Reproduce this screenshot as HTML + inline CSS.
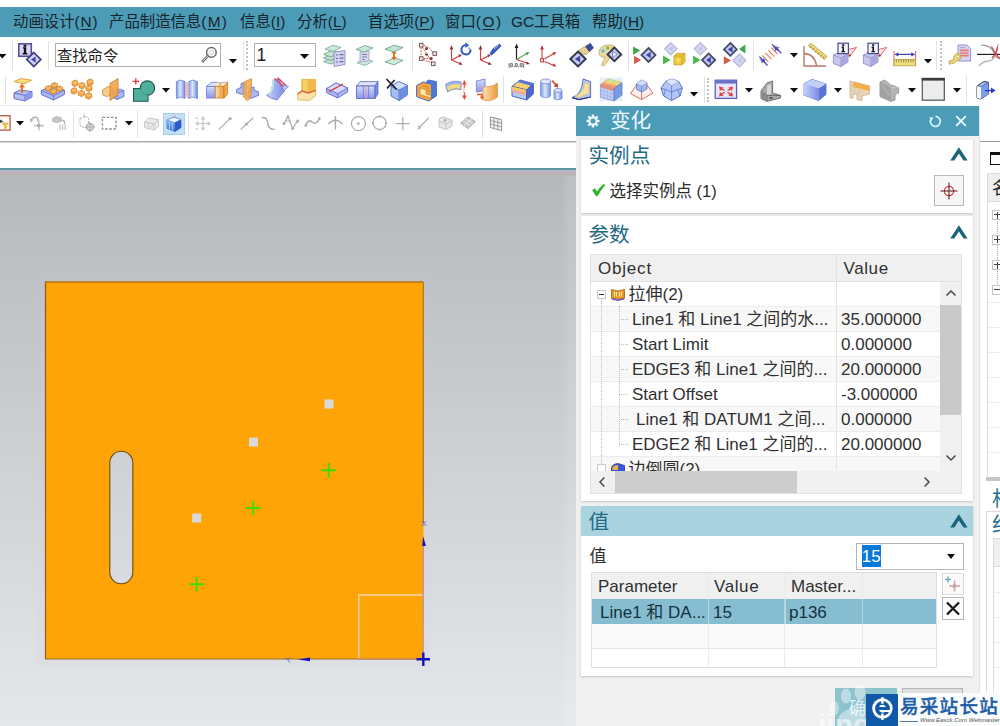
<!DOCTYPE html>
<html lang="zh-CN">
<head>
<meta charset="utf-8">
<title>NX</title>
<style>
html,body{margin:0;padding:0;}
body{width:1000px;height:726px;overflow:hidden;background:#fff;position:relative;
 font-family:"Liberation Sans","Noto Sans CJK SC",sans-serif;color:#222;}
.abs{position:absolute;}
#menubar{left:0;top:7px;width:1000px;height:30px;background:#4c9cb7;}
#menubar span{position:absolute;top:5px;font-size:15.4px;line-height:20px;color:#17242b;white-space:nowrap;}
#menubar u{text-decoration-thickness:1px;text-underline-offset:2px;}
.vsep{position:absolute;width:1px;background:#e2e2e2;}
.grip{position:absolute;width:2px;border-left:2px dotted #c2c2c2;}
.dd{position:absolute;width:0;height:0;border-left:4px solid transparent;border-right:4px solid transparent;border-top:5px solid #111;}
.ico{position:absolute;overflow:visible;}
/* viewport */
#vp{left:0;top:172px;width:576px;height:554px;background:linear-gradient(#b5b9bb 0px,#b5b9bb 6px,#e5e8eb 554px);}
/* dialog */
#dlg{left:576px;top:106px;width:402.5px;height:620px;background:#f0f0f0;}
#dlgtitle{left:0;top:0;width:402.5px;height:29.5px;background:#4c9bb7;}
.sec{position:absolute;left:4px;width:392px;background:#fff;box-shadow:0 1px 2px rgba(0,0,0,.18);}
.sech{position:absolute;left:12px;font-size:20.6px;line-height:24px;margin-top:.8px;color:#256a84;white-space:nowrap;}
.chev{position:absolute;}
.t17{font-size:17px;line-height:25px;color:#303030;white-space:nowrap;position:absolute;}
.row{position:absolute;left:0;height:25px;}
</style>
</head>
<body>

<!-- ============ MENU BAR ============ -->
<div id="menubar" class="abs">
 <span style="left:13px">动画设计(<u style="padding:0 .9px">N</u>)</span>
 <span style="left:109px">产品制造信息(<u style="padding:0 1.2px">M</u>)</span>
 <span style="left:240px">信息(<u>I</u>)</span>
 <span style="left:297px">分析(<u>L</u>)</span>
 <span style="left:368px">首选项(<u>P</u>)</span>
 <span style="left:445px">窗口(<u style="padding:0 1.6px">O</u>)</span>
 <span style="left:511px">GC工具箱</span>
 <span style="left:592px">帮助(<u>H</u>)</span>
</div>

<!-- ============ TOOLBARS ============ -->
<div id="tb" class="abs" style="left:0;top:37px;width:1000px;height:105px;background:#fff;">
 <!--TB-START-->
<svg class="ico" style="left:-2.5px;top:16.5px" width="8.5" height="4.5" viewBox="0 0 8.5 4.5"><path d="M0 0 H8.5 L4.25 4.5 Z" fill="#0c0c0c"/></svg>
<div class="vsep" style="left:11.5px;top:4px;height:29px;background:#e2e2e2"></div>
<svg class="ico" style="left:17px;top:5px" width="25" height="26" viewBox="0 0 25 26">
 <rect x="1.8" y="1.8" width="12.5" height="12.5" fill="#d9d6f2" stroke="#5a4d9c" stroke-width="1.6"/>
 <path d="M6 5.2 H9.2 V11 H10.4 V12.4 H5.6 V11 H6.8 V6.6 H6 Z" fill="#111"/><rect x="6.6" y="2.8" width="2.8" height="2" fill="#111"/>
 <path d="M16.8 10.5 L23.8 17.5 L16.8 24.5 L9.8 17.5 Z" fill="#d2d0f0" stroke="#3c3c7c" stroke-width="1.7"/>
 <path d="M18.6 14.4 L14 17.6 L18.6 20.8 Z" fill="#3a4ab0"/></svg>
<div class="vsep" style="left:47.5px;top:4px;height:29px;background:#e2e2e2"></div>
<div class="abs" style="left:55px;top:6px;width:165.5px;height:24.4px;border:1px solid #a4b4ac;box-sizing:border-box;background:#fff;"></div>
<div class="abs" style="left:57px;top:7.5px;font-size:15.3px;line-height:21px;color:#1c1c1c;white-space:nowrap;">查找命令</div>
<svg class="ico" style="left:200px;top:9px" width="18" height="18" viewBox="0 0 18 18"><circle cx="11.4" cy="6.4" r="4.8" fill="#fff" stroke="#6a6a6a" stroke-width="1.5"/><circle cx="11.4" cy="6.4" r="2.4" fill="none" stroke="#c9c9c9" stroke-width=".9"/><path d="M8 9.8 L3 15" stroke="#6a6a6a" stroke-width="2.6" stroke-linecap="round"/><path d="M8 9.8 L3.4 14.6" stroke="#e8e8e8" stroke-width="1" stroke-linecap="round"/></svg>
<svg class="ico" style="left:229px;top:22px" width="8" height="4.5" viewBox="0 0 8 4.5"><path d="M0 0 H8 L4.0 4.5 Z" fill="#0c0c0c"/></svg>
<div class="vsep" style="left:242.5px;top:4px;height:29px;background:#e2e2e2"></div>
<div class="grip" style="left:246px;top:4px;height:29px"></div>
<div class="abs" style="left:254px;top:6.4px;width:61.6px;height:24px;border:1px solid #a9b5b0;box-sizing:border-box;background:#fff;"></div>
<div class="abs" style="left:256.5px;top:7px;font-size:17.5px;line-height:22px;color:#1c1c1c;">1</div>
<svg class="ico" style="left:300px;top:17px" width="9" height="5" viewBox="0 0 9 5"><path d="M0 0 H9 L4.5 5 Z" fill="#0c0c0c"/></svg>
<svg class="ico" style="left:323px;top:7px" width="25" height="24" viewBox="0 0 25 24"><path d="M0.5 17.6 L8.0 14 L15.5 16.16 L8.0 20.12 Z" fill="#bfe6d2" stroke="#6a9a88" stroke-width=".8"/><path d="M0.5 14.0 L8.0 10.4 L15.5 12.56 L8.0 16.52 Z" fill="#bfe6d2" stroke="#6a9a88" stroke-width=".8"/><path d="M0.5 10.4 L8.0 6.8 L15.5 8.96 L8.0 12.92 Z" fill="#bfe6d2" stroke="#6a9a88" stroke-width=".8"/><path d="M11 8 L22 6.5 V20.5 L11 22.5 Z" fill="#d4d2f0" stroke="#8c8cc4" stroke-width=".9"/><path d="M13 11 H15 M16.5 10.6 H20.5 M13 14.5 H15 M16.5 14.1 H20.5 M13 18 H15 M16.5 17.6 H20.5" stroke="#6a6aa8" stroke-width="1.1"/><path d="M2 5.0 L10.0 1.2 L18 3.4799999999999995 L10.0 7.66 Z" fill="#c8e8da" stroke="#78a898" stroke-width=".8"/></svg>
<svg class="ico" style="left:354px;top:7px" width="23" height="24" viewBox="0 0 23 24"><path d="M3 18.8 L11.0 15 L19 17.28 L11.0 21.46 Z" fill="#d2ecdf" stroke="#78a898" stroke-width=".8"/><path d="M6 8 L15 7 V17 L6 18 Z" fill="#dcdaf2" stroke="#9a9ac8" stroke-width=".8"/><path d="M8 10.5 H13 M8 13 H13 M8 15.5 H11" stroke="#7a7ab0" stroke-width="1"/><path d="M2 5.5 L10.5 1.5 L19 3.9 L10.5 8.3 Z" fill="#c6e6d6" stroke="#6a9a88" stroke-width=".8"/></svg>
<svg class="ico" style="left:383px;top:7px" width="23" height="23" viewBox="0 0 23 23"><path d="M2 18 L11.0 14 L20 16.4 L11.0 20.8 Z" fill="#cdeadc" stroke="#5c9a86" stroke-width=".8"/><path d="M11 7 V15" stroke="#e87a2a" stroke-width="2"/><path d="M8.4 9.5 L11 6 L13.6 9.5 Z M8.4 13 L11 16.5 L13.6 13 Z" fill="#e86a2a"/><path d="M2 5.2 L11.0 1.2 L20 3.5999999999999996 L11.0 8.0 Z" fill="#c2e4d2" stroke="#5c9a86" stroke-width=".8"/></svg>
<div class="vsep" style="left:412.3px;top:4px;height:29px;background:#e2e2e2"></div>
<svg class="ico" style="left:418px;top:5px" width="22" height="26" viewBox="0 0 22 26">
 <path d="M3 3 V16.5 H13.5 M3 3 Q13 4 15 12 M3 16.5 L15 21.5 M3 3 L15 21.5" fill="none" stroke="#c84a3a" stroke-width="1" stroke-dasharray="1.6 1.1"/>
 <rect x="1.4" y="1.4" width="3.6" height="3.6" fill="#eee" stroke="#6a4a4a" stroke-width=".9"/>
 <rect x="1.4" y="14.8" width="3.6" height="3.6" fill="#eee" stroke="#6a4a4a" stroke-width=".9"/>
 <rect x="15" y="9.8" width="3.6" height="3.6" fill="#eee" stroke="#6a4a4a" stroke-width=".9"/>
 <rect x="13.4" y="20" width="3.6" height="3.6" fill="#eee" stroke="#6a4a4a" stroke-width=".9"/>
 <circle cx="8.5" cy="6.5" r="1.5" fill="#8a3030"/><circle cx="13.2" cy="16.4" r="1.5" fill="#8a3030"/><circle cx="8.5" cy="12.5" r="1.3" fill="#8a3030"/></svg>
<svg class="ico" style="left:448px;top:5px" width="25" height="26" viewBox="0 0 25 26"><path d="M3.5 18 V5.5 M3.5 18 L12 13.5 M3.5 18 L13 22" fill="none" stroke="#d83a3a" stroke-width="1.1"/>
 <path d="M1.6 7.5 L3.5 3 L5.4 7.5 Z M13.8 12.4 L10.2 12.6 L11.8 15.4 Z M14.8 22.8 L10.8 22.8 L12 19.8 Z" fill="#8a3a4a"/><path d="M18 3.2 A4.6 4.6 0 1 0 22.6 8" fill="none" stroke="#3a62c8" stroke-width="2.2"/><path d="M17 0.6 L21.4 3 L17.6 6 Z" fill="#3a62c8"/><path d="M20 6 A3 3 0 0 1 22.6 8" fill="none" stroke="#9ab4e8" stroke-width="2"/></svg>
<svg class="ico" style="left:477px;top:5px" width="25" height="26" viewBox="0 0 25 26"><path d="M3.5 18 V5.5 M3.5 18 L12 13.5 M3.5 18 L13 22" fill="none" stroke="#d83a3a" stroke-width="1.1"/>
 <path d="M1.6 7.5 L3.5 3 L5.4 7.5 Z M13.8 12.4 L10.2 12.6 L11.8 15.4 Z M14.8 22.8 L10.8 22.8 L12 19.8 Z" fill="#8a3a4a"/><path d="M13 11.5 L16 6.8 L22.5 2 L24 4 L18.5 9.6 L14.6 13 Z" fill="#3a5ec8" stroke="#24408a" stroke-width=".7"/><path d="M17 7 L21.6 3.4" stroke="#a8c0f0" stroke-width="1"/></svg>
<svg class="ico" style="left:508px;top:5px" width="25" height="26" viewBox="0 0 25 26">
 <path d="M8.5 17.5 V4" stroke="#222" stroke-width="1.2"/><path d="M6.6 6 L8.5 1.6 L10.4 6 Z" fill="#222"/>
 <path d="M8.5 17.5 L19 11.5" stroke="#5ab05a" stroke-width="1.2"/><path d="M21.6 10 L17.4 10.4 L19 13.4 Z" fill="#4a9a4a"/>
 <path d="M8.5 17.5 L19 21" stroke="#d83a3a" stroke-width="1.2"/><path d="M22 22 L18 22.6 L18.8 19.4 Z" fill="#8a3a4a"/>
 <text x="0.2" y="24.6" font-family="Liberation Sans, sans-serif" font-size="5.6" font-weight="bold" fill="#444">(0,0,0)</text></svg>
<svg class="ico" style="left:537px;top:5px" width="24" height="26" viewBox="0 0 24 26">
 <path d="M5 18 V5.5 M7.5 17 L17 11.5 M7.5 19.5 L17 23.5" fill="none" stroke="#d83a3a" stroke-width="1.1"/>
 <path d="M3.1 7.5 L5 3 L6.9 7.5 Z M19.4 10 L15.4 10.4 L17 13.4 Z M19.6 24.6 L15.4 24.2 L16.8 21.2 Z" fill="#b03a44"/>
 <rect x="3.6" y="16.6" width="3" height="3.4" fill="#f4d0d0" stroke="#c03a3a" stroke-width=".9"/></svg>
<svg class="ico" style="left:568px;top:5px" width="26" height="26" viewBox="0 0 26 26">
 <path d="M10.5 8.5 L16 4.8 L19.5 5.4 L22 9 L18 12.6 L13 12 Z" fill="#e8cf96" stroke="#b89a5a" stroke-width=".7"/>
 <path d="M17.5 4.4 L22.4 1.4 L25.4 6 L21.4 9.4 Z" fill="#3c4c9c" stroke="#26306a" stroke-width=".7"/>
 <path d="M10 9.6 L17.6 17 L10 24.4 L2.4 17 Z" fill="#d0cdf0" stroke="#343850" stroke-width="2.1"/>
 <path d="M12.2 13.4 L6.8 17 L12.2 20.6 Z" fill="#3848a8"/></svg>
<svg class="ico" style="left:597px;top:5px" width="25" height="26" viewBox="0 0 25 26">
 <path d="M2 11 Q2 4 10 3 Q18 2.4 19.6 7 Q20 11 15 12.4 Q11.6 13.4 13 16 L7 24 L4.4 23 L8 15.4 Q2.4 15.6 2 11 Z" fill="#ecd9a0" stroke="#c4a860" stroke-width=".8"/>
 <circle cx="6" cy="9" r="1.7" fill="#5ab8d8"/><circle cx="10.6" cy="6" r="1.7" fill="#68c068"/><circle cx="15.6" cy="6.6" r="1.6" fill="#e8c040"/>
 <path d="M17.4 5.6 L24.2 12.4 L17.4 19.2 L10.6 12.4 Z" fill="#d0cdf0" stroke="#343850" stroke-width="2"/>
 <path d="M15.6 9.2 L20.4 12.4 L15.6 15.6 Z" fill="#f4f4ff" stroke="#3848a8" stroke-width=".6"/></svg>
<div class="vsep" style="left:627.5px;top:4px;height:29px;background:#e2e2e2"></div>
<svg class="ico" style="left:631px;top:5px" width="27" height="26" viewBox="0 0 27 26"><path d="M2.04 4.3999999999999995 L9.18 8.6 L2.04 12.8 Z" fill="#3aa84a"/><path d="M3.04 13.8 L10.18 18 L3.04 22.2 Z" fill="#d8584a"/><path d="M17.5 6 L24.5 13 L17.5 20 L10.5 13 Z" fill="#c9c6ee" stroke="#454b68" stroke-width="1.8"/><path d="M19.7 9.8 L14.9 13 L19.7 16.2 Z" fill="#3848a8"/></svg>
<svg class="ico" style="left:662px;top:5px" width="26" height="26" viewBox="0 0 26 26"><path d="M8.8 0.5999999999999996 L15.0 6.8 L8.8 13.0 L2.6000000000000005 6.8 Z" fill="#d5d6f0" stroke="#b4b6dc" stroke-width="1.2"/><path d="M10.600000000000001 4.199999999999999 L6.800000000000001 6.8 L10.600000000000001 9.4 Z" fill="#c2c4e6"/><path d="M1.0799999999999992 13.6 L8.56 18 L1.0799999999999992 22.4 Z" fill="#4cb84c"/><path d="M12 14 L15 11.4 H23 V20 L20 22.8 H12 Z" fill="#f0c838" stroke="#c89a18" stroke-width=".8"/><path d="M12 14 H20 V22.8 M20 14 L23 11.4" fill="none" stroke="#c89a18" stroke-width=".8"/><path d="M13.6 18 H18.6 M16 15.6 V21" stroke="#fbe88a" stroke-width="1.2"/></svg>
<svg class="ico" style="left:692px;top:5px" width="26" height="26" viewBox="0 0 26 26"><path d="M8.4 0.5999999999999996 L14.600000000000001 6.8 L8.4 13.0 L2.2 6.8 Z" fill="#d5d6f0" stroke="#b4b6dc" stroke-width="1.2"/><path d="M10.200000000000001 4.199999999999999 L6.4 6.8 L10.200000000000001 9.4 Z" fill="#c2c4e6"/><path d="M1.0799999999999992 13.6 L8.56 18 L1.0799999999999992 22.4 Z" fill="#4cb84c"/><path d="M16.6 11.4 L23.200000000000003 18 L16.6 24.6 L10.000000000000002 18 Z" fill="#c9c6ee" stroke="#454b68" stroke-width="1.8"/><path d="M18.8 14.8 L14.000000000000002 18 L18.8 21.2 Z" fill="#3848a8"/></svg>
<svg class="ico" style="left:722px;top:5px" width="26" height="26" viewBox="0 0 26 26"><path d="M8.4 1.0 L14.8 7.4 L8.4 13.8 L2.0 7.4 Z" fill="#c9c6ee" stroke="#454b68" stroke-width="1.8"/><path d="M10.600000000000001 4.2 L5.800000000000001 7.4 L10.600000000000001 10.600000000000001 Z" fill="#3848a8"/><path d="M1.8399999999999999 14.2 L8.98 18.4 L1.8399999999999999 22.599999999999998 Z" fill="#d8584a"/><path d="M17.4 11.999999999999998 L23.799999999999997 18.4 L17.4 24.799999999999997 L10.999999999999998 18.4 Z" fill="#d5d6f0" stroke="#b4b6dc" stroke-width="1.2"/><path d="M19.2 15.799999999999999 L15.399999999999999 18.4 L19.2 21.0 Z" fill="#c2c4e6"/><path d="M23.4 2.6 L17 7 L23.4 11.4 Z" fill="#3aa84a"/></svg>
<div class="vsep" style="left:752.5px;top:4px;height:29px;background:#e2e2e2"></div>
<svg class="ico" style="left:758px;top:6px" width="25" height="25" viewBox="0 0 25 25">
 <path d="M4.4 12.4 L10.4 18.8 M7.4 9.8 L13.4 16.2 M10.4 7.2 L16.4 13.6 M13.4 4.6 L19.4 11 M16.2 2.4 L21.6 8.2" stroke="#ec7a6a" stroke-width="1.1" fill="none"/>
 <path d="M1.4 13.6 L9.6 22.6 M14 1.4 L23.4 10.4" stroke="#3c48b8" stroke-width="1.3"/>
 <path d="M5 17.6 l0 -3.4 l1 2.4 l2.6 -.6 l-2.2 1.8 l1.2 2.6 l-2.4 -1.4 l-2.2 1.6 l.8 -2.6 l-2.4 -1.4 l2.8 0 Z M18.4 5.6 l0 -3.4 l1 2.4 l2.6 -.6 l-2.2 1.8 l1.2 2.6 l-2.4 -1.4 l-2.2 1.6 l.8 -2.6 l-2.4 -1.4 l2.8 0 Z" fill="#3c48b8"/></svg>
<svg class="ico" style="left:789.5px;top:16px" width="8" height="4.5" viewBox="0 0 8 4.5"><path d="M0 0 H8 L4.0 4.5 Z" fill="#0c0c0c"/></svg>
<svg class="ico" style="left:802px;top:6px" width="26" height="25" viewBox="0 0 26 25">
 <path d="M2 3 V23 H24" fill="none" stroke="#b87868" stroke-width="1.4"/>
 <path d="M2 10.5 Q13 11 14.6 23" fill="none" stroke="#b87868" stroke-width="1.3"/>
 <path d="M6.4 2.4 L9.2 0.6 L25 13.4 L22.4 16.6 Z" fill="#f0d878" stroke="#b89838" stroke-width=".8"/>
 <path d="M9.4 3.2 L8 5 M12 5.2 L10.6 7 M14.6 7.4 L13.2 9.2 M17.2 9.4 L15.8 11.2 M19.8 11.6 L18.4 13.4 M22.2 13.4 L21 15" stroke="#8a6a1a" stroke-width=".8"/></svg>
<svg class="ico" style="left:832px;top:5px" width="26" height="26" viewBox="0 0 26 26">
 <path d="M1.4 13 L7 10 L16 11.6 V20 L9 24.6 L1.4 21.4 Z" fill="#c9c6ee" stroke="#8a88c8" stroke-width=".8"/>
 <path d="M1.4 13 L9 16 L16 11.6 M9 16 V24.6" fill="none" stroke="#8a88c8" stroke-width=".8"/>
 <path d="M9 16 L16 11.6 V20 L9 24.6 Z" fill="#a9a6dc"/>
 <path d="M13 8.4 L24.6 5.4 L17.4 14.6" fill="#fbe4e0" stroke="#d85a5a" stroke-width=".9"/><circle cx="17.6" cy="13.4" r="1.2" fill="#b03a3a"/>
 <rect x="6" y="1.2" width="10.4" height="10.4" fill="#f4f4fc" stroke="#4a4a8a" stroke-width="1.2"/>
 <path d="M9.6 4.6 H12 V9 H13 V10.2 H9.4 V9 H10.4 V5.8 H9.6 Z" fill="#111"/><rect x="10.2" y="2.2" width="2" height="1.7" fill="#111"/></svg>
<svg class="ico" style="left:862px;top:5px" width="26" height="26" viewBox="0 0 26 26">
 <path d="M1.4 13 L7 10 L16 11.6 V20 L9 24.6 L1.4 21.4 Z" fill="#c9c6ee" stroke="#8a88c8" stroke-width=".8"/>
 <path d="M1.4 13 L9 16 L16 11.6 M9 16 V24.6" fill="none" stroke="#8a88c8" stroke-width=".8"/>
 <path d="M9 16 L16 11.6 V20 L9 24.6 Z" fill="#a9a6dc"/>
 <path d="M13 8.4 L24.6 5.4 L17.4 14.6" fill="#fbe4e0" stroke="#d85a5a" stroke-width=".9"/><circle cx="17.6" cy="13.4" r="1.2" fill="#b03a3a"/>
 <rect x="6" y="1.2" width="10.4" height="10.4" fill="#f4f4fc" stroke="#4a4a8a" stroke-width="1.2"/>
 <path d="M9.6 4.6 H12 V9 H13 V10.2 H9.4 V9 H10.4 V5.8 H9.6 Z" fill="#111"/><rect x="10.2" y="2.2" width="2" height="1.7" fill="#111"/></svg>
<svg class="ico" style="left:892px;top:12px" width="26" height="19" viewBox="0 0 26 19">
 <path d="M2 2 V17 M23.6 2 V17" stroke="#d85a5a" stroke-width="1"/>
 <path d="M4 5.4 H21.6" stroke="#3c48a8" stroke-width="1.2"/><path d="M2.4 5.4 L6.4 3.2 V7.6 Z M23.2 5.4 L19.2 3.2 V7.6 Z" fill="#3c48a8"/>
 <rect x="2" y="10.4" width="21.6" height="6.4" fill="#f0dc82" stroke="#b8a040" stroke-width=".8"/>
 <path d="M4.4 10.4 v3 M6.8 10.4 v3 M9.2 10.4 v3 M11.6 10.4 v3 M14 10.4 v3 M16.4 10.4 v3 M18.8 10.4 v3 M21.2 10.4 v3" stroke="#8a7420" stroke-width=".7"/></svg>
<svg class="ico" style="left:924px;top:22px" width="8" height="4.5" viewBox="0 0 8 4.5"><path d="M0 0 H8 L4.0 4.5 Z" fill="#0c0c0c"/></svg>
<div class="vsep" style="left:936.3px;top:4px;height:29px;background:#e2e2e2"></div>
<div class="grip" style="left:940px;top:4px;height:29px"></div>
<svg class="ico" style="left:947px;top:5px" width="26" height="26" viewBox="0 0 26 26">
 <path d="M11 3 H20 L23.6 6.6 V19 H11 Z" fill="#d6d4f2" stroke="#8a8ac0" stroke-width=".9"/>
 <path d="M13 8.4 H21.6 M13 11 H21.6 M13 13.6 H21.6" stroke="#e87a7a" stroke-width="1.6"/>
 <path d="M13 5.6 H18" stroke="#a8a8d8" stroke-width="1.2"/>
 <path d="M1.6 19.6 L7 17 Q6 12.6 10 11.6 Q13.6 11.4 14 14.6 Q14 18 10.6 18.4 L6 22 L4.4 21 L2.6 22.4 Z" fill="#ecd878" stroke="#b8a040" stroke-width=".8"/><circle cx="11" cy="14.6" r="1.3" fill="#fff" stroke="#b8a040" stroke-width=".6"/></svg>
<svg class="ico" style="left:977px;top:5px" width="24" height="26" viewBox="0 0 24 26">
 <path d="M2 24 Q6 19 12 19 Q20 18 21 2" fill="none" stroke="#b4b4b4" stroke-width="1.3"/>
 <path d="M4 3 Q14 3 17.4 11.4 Q19 15.6 23 16.6" fill="none" stroke="#8a8a8a" stroke-width="1.2"/>
 <path d="M0 12.4 H24" stroke="#222" stroke-width="1.2"/>
 <path d="M14.4 4.6 Q18 12 24 17.6 M20.6 4.6 Q19.6 11 15 16" fill="none" stroke="#d83a4a" stroke-width="1.2"/></svg>
<div class="vsep" style="left:5px;top:39px;height:27px;background:#e2e2e2"></div>
<svg class="ico" style="left:12px;top:40px" width="22" height="25" viewBox="0 0 22 25">
 <path d="M2 16 L8 13 L20 14.6 V20 L13 24 L2 21.6 Z" fill="#b4c0f4" stroke="#5a68c8" stroke-width=".9"/>
 <path d="M2 16 L13 18.4 L20 14.6 M13 18.4 V24" fill="none" stroke="#5a68c8" stroke-width=".9"/><path d="M13 18.4 L20 14.6 V20 L13 24 Z" fill="#8c9ae4"/>
 <path d="M10 16 V8" stroke="#e8782a" stroke-width="2.2"/><path d="M7 10.4 L10 6.4 L13 10.4 Z" fill="#e8782a"/>
 <path d="M2 4.6 L9 1.6 L19.6 3.2 L12 6.8 Z" fill="#f8de7a" stroke="#d89a3a" stroke-width=".9"/></svg>
<svg class="ico" style="left:40px;top:41px" width="26" height="24" viewBox="0 0 26 24">
 <path d="M1.4 12.6 L11 8 L24.4 12 V16.4 L13.6 22 L1.4 16.6 Z" fill="#aab6f2" stroke="#5a68c8" stroke-width=".9"/>
 <path d="M1.4 12.6 L13.6 17.6 L24.4 12 M13.6 17.6 V22" fill="none" stroke="#5a68c8" stroke-width=".8"/>
 <g fill="#f2a444" stroke="#c87a1c" stroke-width=".7"><path d="M5.4 9 l3 -1.4 l3 1.2 v3 l-3 1.4 l-3 -1.2 Z"/><path d="M11.4 6 l3 -1.4 l3 1.2 v3 l-3 1.4 l-3 -1.2 Z"/><path d="M10.4 12 l3 -1.4 l3 1.2 v3 l-3 1.4 l-3 -1.2 Z"/><path d="M16.6 9.4 l3 -1.4 l3 1.2 v3 l-3 1.4 l-3 -1.2 Z"/></g>
 <path d="M6 9.4 l2.4 1 l2.6 -1.2 M12 6.4 l2.4 1 l2.6 -1.2 M11 12.4 l2.4 1 l2.6 -1.2 M17.2 9.8 l2.4 1 l2.6 -1.2" fill="none" stroke="#fbd9a0" stroke-width=".8"/></svg>
<svg class="ico" style="left:70px;top:41px" width="26" height="24" viewBox="0 0 26 24"><path d="M2 3.6 l3 -1.6 l3 1.4 v3.6 l-3 1.6 l-3 -1.4 Z" fill="#f4a84a" stroke="#c87a1c" stroke-width=".7"/><path d="M2.6 4 l2.4 1 l2.4 -1.2" fill="none" stroke="#fcdca8" stroke-width=".8"/><path d="M9 6.0 l3 -1.6 l3 1.4 v3.6 l-3 1.6 l-3 -1.4 Z" fill="#f4a84a" stroke="#c87a1c" stroke-width=".7"/><path d="M9.6 6.4 l2.4 1 l2.4 -1.2" fill="none" stroke="#fcdca8" stroke-width=".8"/><path d="M16 8.6 l3 -1.6 l3 1.4 v3.6 l-3 1.6 l-3 -1.4 Z" fill="#f4a84a" stroke="#c87a1c" stroke-width=".7"/><path d="M16.6 9 l2.4 1 l2.4 -1.2" fill="none" stroke="#fcdca8" stroke-width=".8"/><path d="M1 11.2 l3 -1.6 l3 1.4 v3.6 l-3 1.6 l-3 -1.4 Z" fill="#f4a84a" stroke="#c87a1c" stroke-width=".7"/><path d="M1.6 11.6 l2.4 1 l2.4 -1.2" fill="none" stroke="#fcdca8" stroke-width=".8"/><path d="M8.4 13.6 l3 -1.6 l3 1.4 v3.6 l-3 1.6 l-3 -1.4 Z" fill="#f4a84a" stroke="#c87a1c" stroke-width=".7"/><path d="M9.0 14 l2.4 1 l2.4 -1.2" fill="none" stroke="#fcdca8" stroke-width=".8"/><path d="M15.6 16.2 l3 -1.6 l3 1.4 v3.6 l-3 1.6 l-3 -1.4 Z" fill="#f4a84a" stroke="#c87a1c" stroke-width=".7"/><path d="M16.2 16.6 l2.4 1 l2.4 -1.2" fill="none" stroke="#fcdca8" stroke-width=".8"/><path d="M17 2.6 l3 -1.6 l3 1.4 v3.6 l-3 1.6 l-3 -1.4 Z" fill="#f4a84a" stroke="#c87a1c" stroke-width=".7"/><path d="M17.6 3 l2.4 1 l2.4 -1.2" fill="none" stroke="#fcdca8" stroke-width=".8"/></svg>
<svg class="ico" style="left:101px;top:40px" width="25" height="25" viewBox="0 0 25 25">
 <path d="M1.6 13 L7 9.6 L12 10.6 V17 L6 19.6 L1.6 18 Z" fill="#f8cc8a" stroke="#c88a3a" stroke-width=".8"/>
 <path d="M12 14 L19 12 L23 13.6 V19.6 L16 22.4 L12 20.6 Z" fill="#aab8f4" stroke="#5a68c8" stroke-width=".8"/><path d="M12 14 L16 15.8 L23 13.6 M16 15.8 V22.4" fill="none" stroke="#5a68c8" stroke-width=".7"/>
 <path d="M9 6.4 L17 1.6 V17.6 L9 23.6 Z" fill="#f2a444" fill-opacity=".88" stroke="#c87a1c" stroke-width=".8"/></svg>
<svg class="ico" style="left:132px;top:41px" width="25" height="25" viewBox="0 0 25 25">
 <rect x="1.6" y="10.6" width="14.4" height="12.6" fill="#4fae9c" stroke="#245a50" stroke-width="1.2"/>
 <circle cx="15.4" cy="10" r="7.2" fill="#4fae9c" stroke="#245a50" stroke-width="1.2"/>
 <path d="M2.2 11.2 H9 A7.2 7.2 0 0 0 15.4 17 V22.6 H2.2 Z" fill="#4fae9c"/>
 <path d="M0.6 3.4 H7 M3.8 0.2 V6.6" stroke="#e0323a" stroke-width="1.3"/></svg>
<svg class="ico" style="left:161.5px;top:50.5px" width="8" height="4.5" viewBox="0 0 8 4.5"><path d="M0 0 H8 L4.0 4.5 Z" fill="#0c0c0c"/></svg>
<svg width="0" height="0" style="position:absolute"><defs><linearGradient id="cyl" x1="0" x2="1"><stop offset="0" stop-color="#7c9ae8"/><stop offset=".45" stop-color="#dce8fc"/><stop offset="1" stop-color="#6c8ae0"/></linearGradient><linearGradient id="blv" x1="0" x2="0" y1="0" y2="1"><stop offset="0" stop-color="#d6dcfa"/><stop offset="1" stop-color="#8a98ea"/></linearGradient><linearGradient id="orv" x1="0" x2="1"><stop offset="0" stop-color="#fbe0b0"/><stop offset="1" stop-color="#f09a3a"/></linearGradient><linearGradient id="blh" x1="0" x2="1"><stop offset="0" stop-color="#c6d0fa"/><stop offset="1" stop-color="#7c8ce4"/></linearGradient><linearGradient id="cubeL" x1="0" x2="0" y1="0" y2="1"><stop offset="0" stop-color="#86b6f6"/><stop offset="1" stop-color="#3a70dc"/></linearGradient><linearGradient id="cube3" x1="0" x2="0" y1="0" y2="1"><stop offset="0" stop-color="#2a66d8"/><stop offset="1" stop-color="#1a48b8"/></linearGradient></defs></svg>
<svg class="ico" style="left:175px;top:41px" width="25" height="24" viewBox="0 0 25 24">
 <path d="M1.4 3.6 Q5.6 0.6 10 3.6 V20.6 Q5.6 17.6 1.4 20.6 Z" fill="url(#cyl)" stroke="#5a78d0" stroke-width=".7"/>
 <path d="M13.6 3.6 Q18 0.6 22.4 3.6 V20.6 Q18 17.6 13.6 20.6 Z" fill="url(#cyl)" stroke="#5a78d0" stroke-width=".7"/>
 <rect x="10" y="4" width="3.6" height="16" fill="#f2c4cc"/><path d="M10 7 h3.6 M10 10 h3.6 M10 13 h3.6 M10 16 h3.6" stroke="#d8909c" stroke-width=".6"/></svg>
<svg class="ico" style="left:205px;top:41px" width="26" height="24" viewBox="0 0 26 24">
 <path d="M1.6 8.4 L6 4.4 H22.6 L19 8.4 Z" fill="#dfe4fb" stroke="#6a78d0" stroke-width=".8"/>
 <path d="M12 4.4 H22.6 L19 8.4 H10 Z" fill="#fbe2b8"/>
 <rect x="1.6" y="8.4" width="8.6" height="11.6" fill="url(#blv)" stroke="#6a78d0" stroke-width=".8"/>
 <rect x="10.2" y="8.4" width="8.8" height="11.6" fill="url(#orv)" stroke="#c87a1c" stroke-width=".8"/>
 <path d="M19 8.4 L22.6 4.4 V16 L19 20 Z" fill="#f4a84a" stroke="#c87a1c" stroke-width=".8"/>
 <path d="M13.4 8.4 L15.6 5 V16 L13.4 20" fill="none" stroke="#d89a5a" stroke-width=".8"/></svg>
<svg class="ico" style="left:235px;top:40px" width="25" height="25" viewBox="0 0 25 25">
 <path d="M1.6 12.4 L6 10.4 V6.6 L10 5.4 V9 L13 10 V15 L6.4 17.4 L1.6 15.6 Z" fill="#aab8f4" stroke="#5a68c8" stroke-width=".8"/>
 <path d="M11 16 L15 14.6 V11 L19 10 V13.4 L23.4 14.6 V18.4 L16 21.4 L11 19.6 Z" fill="#aab8f4" stroke="#5a68c8" stroke-width=".8"/>
 <path d="M8.4 5.4 L16.4 1.6 V18.4 L12.6 24 L8.4 20 Z" fill="#f2a444" fill-opacity=".85" stroke="#d88a3a" stroke-width=".8"/>
 <path d="M12.6 4 V24" stroke="#e8c088" stroke-width=".7"/></svg>
<svg class="ico" style="left:265px;top:40px" width="25" height="25" viewBox="0 0 25 25">
 <path d="M8 3 L15 2 Q15 10 19.6 14 L12 23 Q6 22 1.6 18.4 Q8 14 8 3 Z" fill="url(#blh)" stroke="#6a78d0" stroke-width=".8"/>
 <path d="M8 3 Q9 11 4 17" fill="none" stroke="#c8f0d8" stroke-width="1.6"/>
 <path d="M15.4 6.4 L23.6 9.4 L19 14 Z" fill="#b8c6f6" stroke="#6a78d0" stroke-width=".7"/>
 <path d="M9.6 1.4 L18.6 9.6 M12.4 0.8 L21 8.4" stroke="#e8324a" stroke-width="1.2"/></svg>
<svg class="ico" style="left:296px;top:40px" width="23" height="25" viewBox="0 0 23 25">
 <path d="M6 2.4 H19.6 V18 L17 21 H6 Z" fill="#f7cf5e" stroke="#d8a838" stroke-width=".7"/>
 <path d="M12.4 2.4 V14 M6 2.4 V14" stroke="#e8b040" stroke-width=".8"/><path d="M12.4 2.4 H19.6 V14 H12.4 Z" fill="#f2b848"/>
 <path d="M1.6 17 L6 13.6 L12 15.6 L19.6 13 V18 L14 23.6 L1.6 23 Z" fill="#fbe2a8" stroke="#d8b060" stroke-width=".7"/>
 <path d="M1.6 17 L6 14 L12 16 L19.6 13.4" fill="none" stroke="#d8623a" stroke-width="1.4"/></svg>
<svg class="ico" style="left:325px;top:42px" width="24" height="22" viewBox="0 0 24 22">
 <path d="M1.6 9.6 L11 4 L22.6 9 V13 L12.6 19 L1.6 13.6 Z" fill="#aab6f2" stroke="#5a68c8" stroke-width=".9"/>
 <path d="M1.6 9.6 L11 4 L22.6 9 L12.6 14.6 Z" fill="#d6dcfa" stroke="#5a68c8" stroke-width=".8"/><path d="M12.6 14.6 V19" stroke="#5a68c8" stroke-width=".8"/>
 <path d="M4 12.6 L18 5" stroke="#e0323a" stroke-width="1.2"/></svg>
<svg class="ico" style="left:355px;top:42px" width="25" height="22" viewBox="0 0 25 22">
 <path d="M1.6 7 L5 2.6 H23 L20 7 Z" fill="#e0e5fc" stroke="#5a68c8" stroke-width=".8"/>
 <rect x="1.6" y="7" width="18.4" height="12.4" fill="url(#blv)" stroke="#5a68c8" stroke-width=".9"/>
 <path d="M20 7 L23 2.6 V15 L20 19.4 Z" fill="#7c8ce4" stroke="#5a68c8" stroke-width=".8"/>
 <path d="M8.4 7 V19.4 M13.6 7 V19.4" stroke="#6a78d0" stroke-width=".8"/><path d="M11 7 V19.4" stroke="#e89ab0" stroke-width=".9"/></svg>
<svg class="ico" style="left:385px;top:40px" width="24" height="25" viewBox="0 0 24 25">
 <path d="M6 9 L14 4.6 L22.4 8.4 V18 L14 23.6 L6 19 Z" fill="#a4bcf0" stroke="#4a68c0" stroke-width=".9"/>
 <path d="M6 9 L14 13 L22.4 8.4 M14 13 V23.6" fill="none" stroke="#4a68c0" stroke-width=".8"/><path d="M14 13 L22.4 8.4 V18 L14 23.6 Z" fill="#6c90e0"/><path d="M6 9 L14 4.6 L22.4 8.4 L14 13 Z" fill="#cfe0fa" stroke="#4a68c0" stroke-width=".6"/>
 <path d="M1.4 2 L11.6 12.4 M9.6 3 L2 11.4" stroke="#1c1c2c" stroke-width="1.6"/></svg>
<svg class="ico" style="left:415px;top:40px" width="24" height="25" viewBox="0 0 24 25">
 <path d="M1.6 8.6 L8 5 L13 6 L13 3 L21.4 4.6 V19 L13.6 24 L1.6 19.6 Z" fill="#f2a444" stroke="#4a68c8" stroke-width="1"/>
 <path d="M13 3 L21.4 4.6 V19 L16 22 V7.6 L9.6 6 Z" fill="#4a78d8"/>
 <path d="M5 11 L11 12.6 V17 L16 18.4 V21 L5 17.6 Z" fill="#fde4b0" stroke="#c87a1c" stroke-width=".6"/>
 <path d="M8 9 L13 10 V14 L16 15" fill="none" stroke="#c87a1c" stroke-width=".7"/></svg>
<svg class="ico" style="left:444px;top:41px" width="25" height="24" viewBox="0 0 25 24">
 <path d="M1.6 6.4 Q9 1.6 17 4 V11.6 Q9 9.4 3.6 14 Z" fill="#f4dc82" stroke="#6a78d0" stroke-width=".9"/>
 <path d="M1.6 6.4 Q9 1.6 17 4 V6.6 Q9 4.4 2.2 9 Z" fill="#9ab0f0"/>
 <path d="M20.4 5 V19" stroke="#e85a4a" stroke-width="1.4"/><path d="M18 6.4 L20.4 2 L22.8 6.4 Z M18 17.6 L20.4 22 L22.8 17.6 Z" fill="#e8503a"/>
 <path d="M20.4 9.6 V14.4" stroke="#fbe0d8" stroke-width="1.6"/></svg>
<svg class="ico" style="left:474px;top:40px" width="25" height="25" viewBox="0 0 25 25">
 <path d="M2.4 4 L11 2 V13.6 L2.4 15 Z" fill="url(#blv)" stroke="#6a78d0" stroke-width=".8"/>
 <path d="M9 10 L16 9.4 Q20 9 23.4 6 V20 Q19 24 12 23.6 L9 22.6 Z" fill="url(#orv)" stroke="#d89a4a" stroke-width=".8"/>
 <path d="M3 17.4 H8 V21 " fill="none" stroke="#e8623a" stroke-width="1.6"/><path d="M5.6 19.4 L8 23 L10.4 19.4 Z" fill="#e8623a"/></svg>
<div class="vsep" style="left:503px;top:39px;height:27px;background:#e2e2e2"></div>
<svg class="ico" style="left:510px;top:40px" width="25" height="25" viewBox="0 0 25 25">
 <path d="M2 9.4 L10 3 L23.4 6.6 L16.6 13 Z" fill="#f7d070" stroke="#3a58b8" stroke-width=".9"/>
 <path d="M10 3 L23.4 6.6 L21 8.8 L7.6 5 Z" fill="#5a78d8"/>
 <path d="M2 9.4 L16.6 13 V23 L2 19 Z" fill="#b8c8f6" stroke="#3a58b8" stroke-width=".9"/>
 <path d="M2 9.4 L16.6 13 V16 L2 12.4 Z" fill="#f7c860"/><path d="M2 12.4 L16.6 16 V18.6 L2 15 Z" fill="#f2a8a0"/>
 <path d="M16.6 13 L23.4 6.6 V17 L16.6 23 Z" fill="#4a6ad0" stroke="#3a58b8" stroke-width=".8"/></svg>
<svg class="ico" style="left:539px;top:40px" width="25" height="25" viewBox="0 0 25 25">
 <path d="M1.6 4.4 V19 Q6.6 22.6 11.6 19 V4.4 Z" fill="url(#cyl)" stroke="#7a86d0" stroke-width=".8"/><ellipse cx="6.6" cy="4.4" rx="5" ry="2.4" fill="#e2e6fc" stroke="#7a86d0" stroke-width=".8"/>
 <path d="M15 13.4 V21.6 Q19 24.2 23 21.6 V13.4 Z" fill="url(#cyl)" stroke="#7a86d0" stroke-width=".8"/><ellipse cx="19" cy="13.4" rx="4" ry="1.9" fill="#e2e6fc" stroke="#7a86d0" stroke-width=".8"/>
 <path d="M13 3.6 L17.6 8.6" stroke="#e0523a" stroke-width="1.8"/><path d="M19.4 10.6 L14.6 9.6 L18.4 5.8 Z" fill="#d0402a"/></svg>
<svg class="ico" style="left:570px;top:40px" width="24" height="25" viewBox="0 0 24 25">
 <path d="M13 2 L20.6 4.6 V20 L9 22.6 L2 20.6 Q12 18 13 2 Z" fill="#b8c6f6" stroke="#4a62c0" stroke-width=".9"/>
 <path d="M14.6 5.4 L19 7 V17 Q14 16.4 10 20.4 L5 19.4 Q14 16 14.6 5.4 Z" fill="#f8e29a" stroke="#d8b860" stroke-width=".6"/>
 <path d="M2 20.6 L9 22.6 L20.6 20" fill="none" stroke="#2a3a8a" stroke-width="1.2"/></svg>
<svg class="ico" style="left:599px;top:40px" width="25" height="25" viewBox="0 0 25 25">
 <rect x="0.6" y="0.6" width="23" height="23.6" fill="#cfe2f2" opacity=".55"/>
 <path d="M1.6 7.6 L9 2 L23 5.6 L15 11.6 Z" fill="#f7d070" stroke="#c89a38" stroke-width=".7"/>
 <path d="M4.6 5.4 L18.6 9 L15 11.6 L1.6 7.6 Z" fill="#f2a070"/><path d="M9 2 L23 5.6 L21 7 L7 3.4 Z" fill="#c8e4a8"/>
 <path d="M1.6 7.6 L15 11.6 V24 L1.6 20.4 Z" fill="#c2d2f6" stroke="#7a8ad8" stroke-width=".7"/>
 <path d="M1.6 10 L15 14 M5 8.6 V21.4 M8.4 9.6 V22.4 M11.8 10.6 V23.2 M1.6 13.4 L15 17.4 M1.6 16.8 L15 20.8" stroke="#9aaae8" stroke-width=".6"/><path d="M1.6 7.6 L15 11.6 V14 L1.6 10 Z" fill="#f08a6a"/>
 <path d="M15 11.6 L23 5.6 V18 L15 24 Z" fill="#7a9ae4" stroke="#5a78d0" stroke-width=".7"/></svg>
<svg class="ico" style="left:629px;top:41px" width="26" height="24" viewBox="0 0 26 24">
 <path d="M1.6 15.6 L8 6 H17 L24 15 L12.6 21.6 Z" fill="#fdf0ec" stroke="#d86a5a" stroke-width="1"/>
 <path d="M12.6 21.6 V12 M8 6 L12.6 12 L17 6" fill="none" stroke="#d86a5a" stroke-width=".9"/>
 <path d="M7.6 5.6 L12.4 2 L18 5 V11 L12.6 14 L7.6 11.4 Z" fill="#a4b8f0" stroke="#5a78d0" stroke-width=".8"/><path d="M7.6 5.6 L12.6 8 L18 5 M12.6 8 V14" fill="none" stroke="#5a78d0" stroke-width=".7"/><path d="M7.6 5.6 L12.4 2 L18 5 L12.6 8 Z" fill="#d2dcfa"/></svg>
<svg class="ico" style="left:659px;top:40px" width="25" height="25" viewBox="0 0 25 25">
 <path d="M2 11 L7 4 L13 2 L19.6 4.4 L23.4 11 L21 19 L12.6 23.6 L4.6 19 Z" fill="#b4c6f4" stroke="#4a6ac8" stroke-width=".9"/>
 <path d="M7 4 L12.6 8.6 L19.6 4.4 M12.6 8.6 V23.6 M2 11 L6.6 12.6 L12.6 15 L19 12.6 L23.4 11 M6.6 12.6 L4.6 19 M19 12.6 L21 19" fill="none" stroke="#4a6ac8" stroke-width=".7"/>
 <path d="M7 4 L13 2 L19.6 4.4 L12.6 8.6 Z" fill="#dde6fc"/></svg>
<svg class="ico" style="left:689.5px;top:55px" width="8" height="4.5" viewBox="0 0 8 4.5"><path d="M0 0 H8 L4.0 4.5 Z" fill="#0c0c0c"/></svg>
<div class="vsep" style="left:703.5px;top:39px;height:27px;background:#e2e2e2"></div>
<div class="grip" style="left:707px;top:41px;height:24px"></div>
<svg class="ico" style="left:714px;top:42px" width="24" height="21" viewBox="0 0 24 21">
 <rect x="1.2" y="1.2" width="21.4" height="18.2" fill="#e6e4f8" stroke="#5a62c0" stroke-width="1.3"/><rect x="1.2" y="1.2" width="21.4" height="3.4" fill="#6a72c8"/>
 <g fill="#e0403a"><path d="M5 7.4 L9.6 8.4 L6 12 Z M19 7.4 L14.4 8.4 L18 12 Z M5 17.6 L9.6 16.6 L6 13 Z M19 17.6 L14.4 16.6 L18 13 Z"/></g>
 <path d="M7.4 9.8 L10.4 11.6 M16.6 9.8 L13.6 11.6 M7.4 15.2 L10.4 13.4 M16.6 15.2 L13.6 13.4" stroke="#e0403a" stroke-width="1.3"/></svg>
<svg class="ico" style="left:744.5px;top:50.5px" width="8" height="4.5" viewBox="0 0 8 4.5"><path d="M0 0 H8 L4.0 4.5 Z" fill="#0c0c0c"/></svg>
<svg class="ico" style="left:759px;top:41px" width="24" height="24" viewBox="0 0 24 24">
 <path d="M2 13 L8 5 L13.6 3 V15 L21.6 17.4 V20 L8 23.4 L2 20.6 Z" fill="#a8a8a8" stroke="#6a6a6a" stroke-width=".9"/>
 <path d="M8 7.6 L12 6 V16 L8 17.4 Z" fill="#d6d6d6"/><path d="M2 13 L8 17.4 L21.6 17.4 M8 17.4 V23.4" fill="none" stroke="#5a5a5a" stroke-width=".8"/>
 <path d="M2 13 L8 17.4 V23.4 L2 20.6 Z" fill="#8a8a8a"/><ellipse cx="12" cy="20" rx="2" ry="1" fill="#5a5a5a"/></svg>
<svg class="ico" style="left:789.5px;top:50.5px" width="8" height="4.5" viewBox="0 0 8 4.5"><path d="M0 0 H8 L4.0 4.5 Z" fill="#0c0c0c"/></svg>
<svg class="ico" style="left:802px;top:40px" width="26" height="25" viewBox="0 0 26 25">
 <path d="M2 6.6 L10 2.4 L24 7 V17.4 L16.6 23.6 L2 18 Z" fill="#a8b8f2" stroke="#5a78d8" stroke-width=".9"/>
 <path d="M2 6.6 L10 2.4 L24 7 L16.6 11.6 Z" fill="#c2d0f8"/><path d="M16.6 11.6 L24 7 V17.4 L16.6 23.6 Z" fill="#5a74d8"/>
 <path d="M2 6.6 L16.6 11.6 V23.6 L2 18 Z" fill="url(#blh)"/></svg>
<svg class="ico" style="left:834px;top:50.5px" width="8" height="4.5" viewBox="0 0 8 4.5"><path d="M0 0 H8 L4.0 4.5 Z" fill="#0c0c0c"/></svg>
<svg class="ico" style="left:848px;top:40px" width="24" height="25" viewBox="0 0 24 25">
 <path d="M2 4 L12 6.4 L21.6 9 V17 L14 19 V23.6 L9 22.6 V17.6 L5 17 V21.6 L2 20.6 Z" fill="#e8d4b4" stroke="#c8b090" stroke-width=".8"/>
 <path d="M5 5 L21.6 9 V14 L5 10 Z" fill="#f2b048"/><path d="M3 7 L3 20 M7 9 V17 M11 10 V18" stroke="#d8c4a4" stroke-width=".7"/></svg>
<svg class="ico" style="left:878px;top:41px" width="23" height="24" viewBox="0 0 23 24">
 <path d="M2 4 L7 2 L13 7 L20.6 9.6 V15 L17 16.4 V22 L13 23.4 L2 18.6 Z" fill="#b4b4b4" stroke="#8a8a8a" stroke-width=".8"/>
 <path d="M2 4 L13 9.6 V23.4 L2 18.6 Z" fill="#a2a2a2"/><path d="M13 9.6 L20.6 9.6 M7 2 L13 7" stroke="#d0d0d0" stroke-width=".8"/><path d="M3.6 6.4 L11.6 17.6" stroke="#c4c4c4" stroke-width=".8"/></svg>
<svg class="ico" style="left:908px;top:50.5px" width="8" height="4.5" viewBox="0 0 8 4.5"><path d="M0 0 H8 L4.0 4.5 Z" fill="#0c0c0c"/></svg>
<svg class="ico" style="left:921px;top:40px" width="25" height="25" viewBox="0 0 25 25"><rect x="1.3" y="1.6" width="22" height="21.6" fill="#ececec" stroke="#4a5a4a" stroke-width="1.2"/><rect x="0.7" y="0.8" width="23.2" height="2.8" fill="#3c3c3c"/></svg>
<svg class="ico" style="left:952.5px;top:50.5px" width="8" height="4.5" viewBox="0 0 8 4.5"><path d="M0 0 H8 L4.0 4.5 Z" fill="#0c0c0c"/></svg>
<div class="vsep" style="left:965.5px;top:39px;height:27px;background:#e2e2e2"></div>
<svg class="ico" style="left:975px;top:42px" width="22" height="22" viewBox="0 0 22 22">
 <path d="M2 7 L9 2.4 L13.4 3.4 V15 L6 20 L2 19 Z" fill="#aac0f4" stroke="#2a3a5a" stroke-width="1"/>
 <path d="M2 7 L6 8 L13.4 3.4 M6 8 V20" fill="none" stroke="#2a3a5a" stroke-width=".9"/><path d="M2 7 L6 8 V20 L2 19 Z" fill="#f4f6fc"/><path d="M6 8 L13.4 3.4 V15 L6 20 Z" fill="#7c9cec"/>
 <path d="M10 11.6 H17" stroke="#2a3ad0" stroke-width="1.4"/><path d="M16 8.6 L20.6 11.6 L16 14.6 Z" fill="#2a3ad0"/></svg>
<svg class="ico" style="left:-4px;top:78px" width="15" height="16" viewBox="0 0 15 16"><rect x="0.7" y="0.7" width="13.4" height="14.4" fill="#fff8f4" stroke="#b85a4a" stroke-width="1.3"/><path d="M3 4 L7.6 6.4 L3 8.6 Z" fill="#3a3a4a"/><path d="M6.4 8 H12.4 L10.2 10.8 V13.4 L8.6 13.4 V10.8 Z" fill="#f0c838" stroke="#c89a18" stroke-width=".5"/></svg>
<svg class="ico" style="left:16px;top:84px" width="8" height="4.5" viewBox="0 0 8 4.5"><path d="M0 0 H8 L4.0 4.5 Z" fill="#0c0c0c"/></svg>
<svg class="ico" style="left:29px;top:78px" width="17" height="17" viewBox="0 0 17 17"><path d="M2 5 Q4 1.4 7.6 2.4 Q10 3.6 8.6 6.4" fill="none" stroke="#adadad" stroke-width="1.4"/><path d="M0.6 4.2 L2.2 7.4 L4.4 4.4 Z" fill="#adadad"/><path d="M4.6 10.6 H15 M9.8 5.6 V15.6" stroke="#c6c6c6" stroke-width="1.6"/><circle cx="9.8" cy="10.6" r="1.8" fill="#adadad"/></svg>
<svg class="ico" style="left:51px;top:78px" width="17" height="17" viewBox="0 0 17 17"><path d="M1.6 3.4 L5 1.6 L10 2.4 V6.4 L6 7.6 L1.6 6.4 Z" fill="#c6c6c6" stroke="#adadad" stroke-width=".7"/><path d="M10 5 Q14 5 13.6 9" fill="none" stroke="#adadad" stroke-width="1.2"/><path d="M9 9.6 V15 M11.6 9.6 V15 M14.2 9.6 V15" stroke="#c6c6c6" stroke-width="1.3"/></svg>
<div class="vsep" style="left:72.5px;top:73px;height:28px;background:#e2e2e2"></div>
<svg class="ico" style="left:78px;top:76px" width="18" height="20" viewBox="0 0 18 20"><path d="M2 5.6 L6.4 3 L10.6 5 V12.4 L6.4 15 L2 12.6 Z" fill="none" stroke="#adadad" stroke-width="1" stroke-dasharray="2 1.2"/><path d="M6.4 1 V6" stroke="#adadad" stroke-width="1" stroke-dasharray="1.4 1"/><circle cx="12" cy="14" r="3.4" fill="#e4e4e4" stroke="#adadad" stroke-width="1.2"/><path d="M7 14 H17 M12 9 V19" stroke="#adadad" stroke-width="1.1"/></svg>
<svg class="ico" style="left:101px;top:79px" width="17" height="15" viewBox="0 0 17 15"><rect x="1.4" y="1.4" width="13.6" height="11.6" fill="none" stroke="#8e8e8e" stroke-width="1.3" stroke-dasharray="2.6 1.6"/></svg>
<svg class="ico" style="left:124.5px;top:84px" width="8" height="4.5" viewBox="0 0 8 4.5"><path d="M0 0 H8 L4.0 4.5 Z" fill="#0c0c0c"/></svg>
<div class="vsep" style="left:137px;top:73px;height:28px;background:#e2e2e2"></div>
<svg class="ico" style="left:143px;top:78px" width="18" height="17" viewBox="0 0 18 17"><path d="M1.6 7 L6 3 L15.6 4.6 V11 L11 15 L1.6 12.6 Z" fill="#ebebeb" stroke="#c6c6c6" stroke-width="1"/><path d="M1.6 7 L11 9 L15.6 4.6 M11 9 V15" fill="none" stroke="#c6c6c6" stroke-width="1"/><ellipse cx="7" cy="10" rx="2.6" ry="2" fill="none" stroke="#c9c9c9" stroke-width=".9"/></svg>
<div class="abs" style="left:163px;top:76px;width:22px;height:21.5px;background:#c3e0f4;border:1px solid #a6d0ee;box-sizing:border-box;"></div>
<svg class="ico" style="left:165px;top:78px" width="18" height="18" viewBox="0 0 18 18">
 <path d="M2 5 L9 2.4 L16 4.6 V12.6 L10 16.4 L2 13.4 Z" fill="#3a72dc" stroke="#2a58c0" stroke-width=".7"/>
 <path d="M2 5 L9 2.4 L16 4.6 L10 7.6 Z" fill="#f4f8ff" stroke="#7aa4ea" stroke-width=".6"/>
 <path d="M2 5 L10 7.6 V16.4 L2 13.4 Z" fill="url(#cubeL)"/><path d="M10 7.6 L16 4.6 V12.6 L10 16.4 Z" fill="#2a5ccc"/>
 <path d="M4.6 6.4 V14.4 M7.4 7.2 V15.4" stroke="#b4d2fa" stroke-width=".9"/><path d="M8 1.6 l1.6 -1 l1.4 1.2" fill="none" stroke="#e0a08a" stroke-width=".9"/></svg>
<div class="vsep" style="left:188px;top:73px;height:28px;background:#e8e8e8"></div>
<svg class="ico" style="left:194px;top:78px" width="18" height="17" viewBox="0 0 18 17"><g fill="#c6c6c6"><path d="M9 1 L11.4 4.4 H6.6 Z M9 16 L11.4 12.6 H6.6 Z M1 8.5 L4.4 6.1 V10.9 Z M17 8.5 L13.6 6.1 V10.9 Z"/><circle cx="9" cy="8.5" r="1.6"/><circle cx="2.6" cy="3" r="1"/><circle cx="2.6" cy="14" r="1"/></g><path d="M9 4 V13 M4 8.5 H14" stroke="#c6c6c6" stroke-width="1"/></svg>
<svg class="ico" style="left:217px;top:79px" width="16" height="15" viewBox="0 0 16 15"><path d="M1.6 13.6 L13.4 2.4" stroke="#adadad" stroke-width="1.3"/><circle cx="13.2" cy="2.6" r="1.5" fill="#adadad"/></svg>
<svg class="ico" style="left:239px;top:79px" width="16" height="15" viewBox="0 0 16 15"><path d="M1.6 13.6 L14 2" stroke="#adadad" stroke-width="1.3"/><circle cx="7.6" cy="8" r="1.4" fill="#adadad"/></svg>
<svg class="ico" style="left:260px;top:78px" width="16" height="17" viewBox="0 0 16 17"><path d="M1.6 2.6 Q7 1.6 7.6 7.6 Q8 14.6 14.6 14.4" fill="none" stroke="#adadad" stroke-width="1.4"/></svg>
<svg class="ico" style="left:282px;top:77px" width="18" height="18" viewBox="0 0 18 18"><path d="M2 9.6 L6 2.6 L10.6 14.4 L15.6 7" fill="none" stroke="#adadad" stroke-width="1.2"/><g fill="#adadad"><circle cx="2" cy="9.6" r="1.5"/><circle cx="6" cy="2.8" r="1.5"/><circle cx="10.6" cy="14.4" r="1.5"/><circle cx="15.6" cy="7" r="1.5"/></g><path d="M3.6 7 H9" stroke="#adadad" stroke-width="1"/></svg>
<svg class="ico" style="left:304px;top:79px" width="18" height="13" viewBox="0 0 18 13"><path d="M1.6 9.6 Q4 2.6 8 6 Q12 9.6 15.6 2.4" fill="none" stroke="#adadad" stroke-width="1.6"/><circle cx="1.8" cy="9.6" r="1.3" fill="#adadad"/><circle cx="15.4" cy="2.6" r="1.3" fill="#adadad"/></svg>
<svg class="ico" style="left:327px;top:78px" width="17" height="16" viewBox="0 0 17 16"><path d="M1.4 9 Q8.4 1.6 15.6 9" fill="none" stroke="#adadad" stroke-width="1.4"/><path d="M8.4 1 V14.6" stroke="#adadad" stroke-width="1.4"/></svg>
<svg class="ico" style="left:350px;top:78px" width="17" height="17" viewBox="0 0 17 17"><circle cx="8.4" cy="8.6" r="7" fill="none" stroke="#adadad" stroke-width="1.2"/><circle cx="8.4" cy="8.6" r="1.3" fill="#adadad"/></svg>
<svg class="ico" style="left:371px;top:78px" width="18" height="17" viewBox="0 0 18 17"><circle cx="8.6" cy="8" r="6.6" fill="none" stroke="#adadad" stroke-width="1.2"/><g fill="#adadad"><circle cx="8.6" cy="1.4" r="1.1"/><circle cx="8.6" cy="14.6" r="1.1"/><circle cx="2" cy="8" r="1.1"/><circle cx="15.2" cy="8" r="1.1"/></g></svg>
<svg class="ico" style="left:395px;top:79px" width="16" height="16" viewBox="0 0 16 16"><path d="M1 7.6 H14.6 M7.8 1 V14.6" stroke="#adadad" stroke-width="1.2"/></svg>
<svg class="ico" style="left:416px;top:79px" width="15" height="15" viewBox="0 0 15 15"><path d="M1.6 13.4 L13 1.6" stroke="#adadad" stroke-width="1.3"/><path d="M2.4 10 L4.6 12.6" stroke="#adadad" stroke-width="1.6"/></svg>
<svg class="ico" style="left:437px;top:78px" width="17" height="16" viewBox="0 0 17 16"><path d="M2 6 Q2 2 6 2 L15 5 V11 L9 14.6 L2 12 Z" fill="#e6e6e6" stroke="#c6c6c6" stroke-width="1"/><path d="M2 6 L9 9 L15 5 M9 9 V14.6" fill="none" stroke="#c6c6c6" stroke-width=".9"/><circle cx="8" cy="5.4" r="1.3" fill="#adadad"/></svg>
<svg class="ico" style="left:459px;top:78px" width="18" height="16" viewBox="0 0 18 16"><path d="M1.6 8 L9 2 L16.4 6.6 L9 13.6 Z" fill="#c9c9c9" stroke="#adadad" stroke-width="1"/><path d="M4 6 L11.6 11 M6.6 4 L14 9 M5 10.6 L12.6 4.4" stroke="#ececec" stroke-width="1"/></svg>
<div class="vsep" style="left:481.5px;top:73px;height:28px;background:#e2e2e2"></div>
<svg class="ico" style="left:489px;top:78px" width="15" height="17" viewBox="0 0 15 17"><path d="M1.4 2 L12.6 4.6 V15.6 L1.4 12.6 Z" fill="#f4f4f4" stroke="#8a8a8a" stroke-width=".9"/><path d="M5 2.8 V13.6 M8.8 3.6 V14.6 M1.4 5.6 L12.6 8.2 M1.4 9 L12.6 11.8" stroke="#8a8a8a" stroke-width=".8"/></svg>
<!--TB-END-->
</div>
<div class="abs" style="left:0;top:105px;width:577px;height:1px;background:#ececf2;"></div>
<div class="abs" style="left:0;top:141px;width:577px;height:1px;background:#a8a8a8;"></div>
<div class="abs" style="left:0;top:142px;width:577px;height:1px;background:#d8d8d8;"></div>
<div class="abs" style="left:0;top:168px;width:577px;height:2px;background:#5a9a9e;"></div>
<div class="abs" style="left:0;top:170px;width:576px;height:6px;z-index:2;background:linear-gradient(#b6b6d0 0,#bbb2c8 25%,#c0aebc 50%,#b8b4b2 72%,#b4b8b6 88%,#b5b9bb);"></div>

<!-- ============ VIEWPORT ============ -->
<div id="vp" class="abs">
 <div class="abs" style="left:562px;top:4px;width:14px;height:550px;background:linear-gradient(90deg,rgba(255,255,255,0),rgba(255,255,255,.11) 50%,rgba(255,255,255,.11));"></div>
 <svg class="abs" style="left:0;top:0" width="577" height="554" viewBox="0 172 577 554">
  <defs>
   <linearGradient id="slotg" x1="0" y1="0" x2="0" y2="1"><stop offset="0" stop-color="#cdd1d3"/><stop offset="1" stop-color="#d9dcdf"/></linearGradient>
  </defs>
  <!-- faint halo -->
  <rect x="41" y="277.5" width="386" height="385" fill="none" stroke="#cec8d8" stroke-width="7" opacity=".13"/>
  <!-- plate -->
  <rect x="45" y="281.5" width="378.5" height="377.5" fill="#ffa406"/>
  <path d="M45.5 659 V282 H423" fill="none" stroke="#8c5a12" stroke-width="1.2"/>
  <path d="M423.3 282 V523" fill="none" stroke="#a0701c" stroke-width="1"/>
  <path d="M45 659 H358" fill="none" stroke="#9a6c24" stroke-width="1"/>
  <!-- slot -->
  <rect x="109.8" y="451.2" width="23" height="132.6" rx="11.5" ry="11.5" fill="url(#slotg)" stroke="#6e4a14" stroke-width="1.1"/>
  <!-- small square sketch -->
  <path d="M358.8 659 V595 H423" fill="none" stroke="#f6d6b0" stroke-width="1.3"/>
  <path d="M423.3 546 V659" fill="none" stroke="#9a86c8" stroke-width="1.1" opacity=".75"/>
  <path d="M358 659.2 H423" fill="none" stroke="#b07a5a" stroke-width="1.3"/>
  <!-- gray squares -->
  <rect x="324.5" y="399.5" width="9" height="9" fill="#d9d9d9"/>
  <rect x="249" y="437.5" width="9" height="9" fill="#d9d9d9"/>
  <rect x="192.2" y="513.5" width="9" height="9" fill="#d9d9d9"/>
  <!-- green plus -->
  <g stroke="#3ddc00" stroke-width="2" fill="none">
   <path d="M321.5 470.3 H336 M328.7 463 V477.5"/>
   <path d="M246 508 H260.5 M253.3 500.8 V515.3"/>
   <path d="M189.3 584.3 H203.8 M196.6 577 V591.5"/>
  </g>
  <!-- blue markers -->
  <g stroke="#1212c4" fill="#1212c4">
   <path d="M416.5 659.3 H430 M423.3 652.5 V666" stroke-width="2.4" fill="none"/>
   <path d="M421.8 521 L426.2 526 M426.2 521 L421.8 526" stroke-width=".8" stroke="#4a56d8" fill="none"/>
   <path d="M423.2 536.5 L426 546 L422.2 546 Z" stroke="none"/>
   <path d="M285.5 657.5 L290 662.5 M290 657.5 L287.7 660" stroke-width=".8" stroke="#4a56d8" fill="none"/>
   <path d="M298 659.6 L310 657.6 L310 661.2 Z" stroke="none"/>
  </g>
 </svg>
</div>

<!-- ============ DIALOG ============ -->
<div id="dlg" class="abs">
 <div id="dlgtitle" class="abs"></div>
 <svg class="abs" style="left:10px;top:8px" width="14" height="14" viewBox="-7 -7 14 14">
  <g fill="#e8f8ff"><circle r="4.5"/><rect x="-1.25" y="-6.5" width="2.5" height="13" rx=".5" transform="rotate(0)"/><rect x="-1.25" y="-6.5" width="2.5" height="13" rx=".5" transform="rotate(45)"/><rect x="-1.25" y="-6.5" width="2.5" height="13" rx=".5" transform="rotate(90)"/><rect x="-1.25" y="-6.5" width="2.5" height="13" rx=".5" transform="rotate(135)"/></g>
  <circle r="2.5" fill="#4c9bb7"/></svg>
<div class="abs" style="left:34px;top:2px;font-size:20.6px;line-height:26px;color:#eefaff;white-space:nowrap;">变化</div>
<svg class="abs" style="left:352px;top:8px" width="15" height="15" viewBox="0 0 15 15"><path d="M3.2 4.6 A5 5 0 1 0 7.6 2.4" fill="none" stroke="#d8f5ff" stroke-width="1.7"/><path d="M1.2 3.2 L5.6 3.4 L3.4 7 Z" fill="#d8f5ff"/></svg>
<svg class="abs" style="left:379px;top:9px" width="12" height="12" viewBox="0 0 12 12"><path d="M1.2 1.2 L10.8 10.8 M10.8 1.2 L1.2 10.8" fill="none" stroke="#eafaff" stroke-width="1.9"/></svg>
<div class="sec" style="left:4.5px;top:33.5px;width:392.5px;height:73.5px;"></div>
<div class="sech" style="left:12.5px;top:37px;">实例点</div>
<svg class="abs" style="left:374.1px;top:40.7px" width="18" height="14" viewBox="0 0 18 14"><path d="M8.9 0.2 L17.6 13.4 H13.5 L8.9 6.6 L4.3 13.4 H0.2 Z" fill="#1b657c"/></svg>
<svg class="abs" style="left:15px;top:77px" width="15" height="14" viewBox="0 0 15 14"><path d="M1.5 7.2 L3.8 5.6 L6 9 C8 5.4 10.4 2.8 13.2 1.2 L13.8 2.4 C11 5.2 8.6 8.6 6.6 12.8 L5 12.8 Z" fill="#2fb52f" stroke="#1f9a22" stroke-width=".5"/></svg>
<div class="abs" style="left:33.5px;top:73px;font-size:16.5px;line-height:24px;color:#2b2b2b;white-space:nowrap;">选择实例点 (1)</div>
<div class="abs" style="left:357.5px;top:69px;width:30px;height:30.5px;border:1px solid #b9b9b9;background:#f7f7f7;box-sizing:border-box;"></div>
<svg class="abs" style="left:364px;top:75.5px" width="18" height="18" viewBox="-9 -9 18 18"><circle r="4.6" fill="none" stroke="#cc3030" stroke-width="1.15"/><path d="M-8.5 0 H8.5 M0 -8.5 V8.5" stroke="#5a1010" stroke-width="1" fill="none"/></svg>
<div class="sec" style="left:4.5px;top:109.5px;width:392.5px;height:285.5px;"></div>
<div class="sech" style="left:12.5px;top:116.7px;">参数</div>
<svg class="abs" style="left:374.1px;top:118.7px" width="18" height="14" viewBox="0 0 18 14"><path d="M8.9 0.2 L17.6 13.4 H13.5 L8.9 6.6 L4.3 13.4 H0.2 Z" fill="#1b657c"/></svg>
<div class="abs" style="left:14px;top:148px;width:372px;height:240px;border:1px solid #e3e3e3;box-sizing:border-box;background:#fff;overflow:hidden;">
<div class="abs" style="left:0;top:0;width:370px;height:26.5px;background:#f0f0f0;border-bottom:1px solid #e2e2e2;box-sizing:border-box;"></div>
<div class="t17" style="left:7px;top:1px;letter-spacing:.8px;">Object</div>
<div class="t17" style="left:252.5px;top:1px;letter-spacing:.6px;">Value</div>
<div class="abs" style="left:0;top:26.5px;width:349px;height:25px;background:#fff;border-bottom:1px solid #ededed;box-sizing:border-box;"></div>
<div class="abs" style="left:0;top:51.5px;width:349px;height:25px;background:#f8f8f8;border-bottom:1px solid #ededed;box-sizing:border-box;"></div>
<div class="abs" style="left:0;top:76.5px;width:349px;height:25px;background:#fff;border-bottom:1px solid #ededed;box-sizing:border-box;"></div>
<div class="abs" style="left:0;top:101.5px;width:349px;height:25px;background:#f8f8f8;border-bottom:1px solid #ededed;box-sizing:border-box;"></div>
<div class="abs" style="left:0;top:126.5px;width:349px;height:25px;background:#fff;border-bottom:1px solid #ededed;box-sizing:border-box;"></div>
<div class="abs" style="left:0;top:151.5px;width:349px;height:25px;background:#f8f8f8;border-bottom:1px solid #ededed;box-sizing:border-box;"></div>
<div class="abs" style="left:0;top:176.5px;width:349px;height:25px;background:#fff;border-bottom:1px solid #ededed;box-sizing:border-box;"></div>
<div class="abs" style="left:0;top:201.5px;width:349px;height:25px;background:#f8f8f8;border-bottom:1px solid #ededed;box-sizing:border-box;"></div>
<div class="abs" style="left:245px;top:0;width:1px;height:215px;background:#e4e4e4;"></div>
<div class="abs" style="left:10px;top:44px;width:0;height:171px;border-left:1px dotted #bcbcbc;"></div>
<div class="abs" style="left:28px;top:51px;width:0;height:138px;border-left:1px dotted #bcbcbc;"></div>
<div class="abs" style="left:28px;top:64px;width:9px;height:0;border-top:1px dotted #bcbcbc;"></div>
<div class="abs" style="left:28px;top:89px;width:9px;height:0;border-top:1px dotted #bcbcbc;"></div>
<div class="abs" style="left:28px;top:114px;width:9px;height:0;border-top:1px dotted #bcbcbc;"></div>
<div class="abs" style="left:28px;top:139px;width:9px;height:0;border-top:1px dotted #bcbcbc;"></div>
<div class="abs" style="left:28px;top:164px;width:9px;height:0;border-top:1px dotted #bcbcbc;"></div>
<div class="abs" style="left:28px;top:189px;width:9px;height:0;border-top:1px dotted #bcbcbc;"></div>
<div class="abs" style="left:5.5px;top:34.5px;width:9px;height:9px;border:1px solid #c9c9c9;background:#fff;box-sizing:border-box;"></div><div class="abs" style="left:7.5px;top:38.5px;width:5px;height:1px;background:#333;"></div>
<svg class="abs" style="left:19px;top:31px" width="16" height="16" viewBox="0 0 16 16">
 <path d="M1.5 3.5 L8 5 L14.5 3.5 V12 L8 13.5 L1.5 12 Z" fill="#e8961e" stroke="#a85c10" stroke-width=".8"/>
 <path d="M4.5 5.5 V10.5 M6.5 5.8 V10.8 M9.5 5.8 V10.8 M11.5 5.5 V10.5" stroke="#fde8a8" stroke-width="1.1"/>
 <path d="M1.5 12 L8 13.5 L14.5 12 L14.5 13.6 L8 15 L1.5 13.6 Z" fill="#6a58c8"/></svg>
<div class="t17" style="left:37.5px;top:26.5px;">拉伸(2)</div>
<div class="t17" style="left:41px;top:51.5px;">Line1 和 Line1 之间的水...</div>
<div class="t17" style="left:250px;top:51.5px;">35.000000</div>
<div class="t17" style="left:41px;top:76.5px;">Start Limit</div>
<div class="t17" style="left:250px;top:76.5px;">0.000000</div>
<div class="t17" style="left:41px;top:101.5px;">EDGE3 和 Line1 之间的...</div>
<div class="t17" style="left:250px;top:101.5px;">20.000000</div>
<div class="t17" style="left:41px;top:126.5px;">Start Offset</div>
<div class="t17" style="left:250px;top:126.5px;">-3.000000</div>
<div class="t17" style="left:45px;top:151.5px;">Line1 和 DATUM1 之间...</div>
<div class="t17" style="left:250px;top:151.5px;">0.000000</div>
<div class="t17" style="left:41px;top:176.5px;">EDGE2 和 Line1 之间的...</div>
<div class="t17" style="left:250px;top:176.5px;">20.000000</div>
<div class="abs" style="left:5.5px;top:209px;width:9px;height:9px;border:1px solid #c9c9c9;background:#fff;box-sizing:border-box;"></div>
<svg class="abs" style="left:19px;top:206px" width="16" height="16" viewBox="0 0 16 16"><path d="M1.5 7 Q2 3 8 2.5 L14.5 4.5 V12 L8 14 L1.5 12 Z" fill="#3a58d8" stroke="#243a9a" stroke-width=".8"/><path d="M2.5 6.5 Q4 4 8 4 L8 9 L2.5 9 Z" fill="#f2b040"/></svg>
<div class="t17" style="left:37.5px;top:201.5px;">边倒圆(2)</div>
<div class="abs" style="left:348.5px;top:26.5px;width:22.0px;height:189.0px;background:#f0f0f0;"></div>
<div class="abs" style="left:348.5px;top:50px;width:22.0px;height:110px;background:#c9c9c9;"></div>
<svg class="abs" style="left:354px;top:34px" width="12" height="8" viewBox="0 0 12 8"><path d="M1.5 6.6 L6 2 L10.5 6.6" fill="none" stroke="#4a4a4a" stroke-width="1.5"/></svg>
<svg class="abs" style="left:354px;top:199px" width="12" height="8" viewBox="0 0 12 8"><path d="M1.5 1.4 L6 6 L10.5 1.4" fill="none" stroke="#4a4a4a" stroke-width="1.5"/></svg>
<div class="abs" style="left:0;top:215.5px;width:370px;height:22.5px;background:#f0f0f0;"></div>
<div class="abs" style="left:24px;top:215.5px;width:182px;height:22.0px;background:#cdcdcd;"></div>
<svg class="abs" style="left:7px;top:220.5px" width="8" height="12" viewBox="0 0 8 12"><path d="M6.4 1.5 L2 6 L6.4 10.5" fill="none" stroke="#4a4a4a" stroke-width="1.5"/></svg>
<svg class="abs" style="left:332px;top:220.5px" width="8" height="12" viewBox="0 0 8 12"><path d="M1.6 1.5 L6 6 L1.6 10.5" fill="none" stroke="#4a4a4a" stroke-width="1.5"/></svg>
</div>
<div class="sec" style="left:4.5px;top:400px;width:392.5px;height:170px;"></div>
<div class="abs" style="left:4.5px;top:400px;width:392.5px;height:29.6px;background:#aad3e0;"></div>
<div class="sech" style="left:12.5px;top:403px;">值</div>
<svg class="abs" style="left:374.1px;top:407.7px" width="18" height="14" viewBox="0 0 18 14"><path d="M8.9 0.2 L17.6 13.4 H13.5 L8.9 6.6 L4.3 13.4 H0.2 Z" fill="#1b657c"/></svg>
<div class="t17" style="left:13.5px;top:437.5px;">值</div>
<div class="abs" style="left:279.5px;top:436.5px;width:108.5px;height:27px;border:1px solid #b4b4b4;background:#fff;box-sizing:border-box;"></div>
<div class="abs" style="left:285.5px;top:439px;width:19px;height:22px;background:#0a78d6;"></div>
<div class="t17" style="left:285.8px;top:437.5px;color:#fff;">15</div>
<div class="dd" style="left:371px;top:448px;border-left-width:4.5px;border-right-width:4.5px;"></div>
<div class="abs" style="left:14.5px;top:466px;width:346.5px;height:96px;border:1px solid #dedede;box-sizing:border-box;background:#fff;overflow:hidden;">
<div class="abs" style="left:0;top:0;width:350px;height:26.3px;background:#f0f0f0;"></div>
<div class="abs" style="left:0;top:26.3px;width:350px;height:24.700000000000045px;background:#87bdd0;"></div>
<div class="abs" style="left:0;top:51px;width:350px;height:25px;background:#fafafa;border-bottom:1px solid #e6e6e6;box-sizing:border-box;"></div>
<div class="abs" style="left:116.1px;top:0;width:1px;height:100px;background:#ebebeb;"></div>
<div class="abs" style="left:116.1px;top:26.3px;width:1.5px;height:24.700000000000045px;background:#b4d8e4;"></div>
<div class="abs" style="left:192.7px;top:0;width:1px;height:100px;background:#ebebeb;"></div>
<div class="abs" style="left:192.7px;top:26.3px;width:1.5px;height:24.700000000000045px;background:#b4d8e4;"></div>
<div class="abs" style="left:270.0px;top:0;width:1px;height:100px;background:#ebebeb;"></div>
<div class="abs" style="left:270.0px;top:26.3px;width:1.5px;height:24.700000000000045px;background:#b4d8e4;"></div>
<div class="t17" style="left:6.5px;top:1px;">Parameter</div>
<div class="t17" style="left:122.5px;top:1px;letter-spacing:.6px;">Value</div>
<div class="t17" style="left:199.5px;top:1px;">Master...</div>
<div class="t17" style="left:8.5px;top:26.5px;color:#14323e;">Line1 和 DA...</div>
<div class="t17" style="left:121.5px;top:26.5px;color:#14323e;">15</div>
<div class="t17" style="left:197.5px;top:26.5px;color:#14323e;">p136</div>
</div>
<div class="abs" style="left:365.5px;top:467px;width:22.5px;height:21.5px;border:1px solid #dcdcdc;background:#fafafa;box-sizing:border-box;"></div>
<svg class="abs" style="left:367px;top:469px" width="20" height="18" viewBox="0 0 20 18"><path d="M2 4.5 H8 M5 1.5 V7.5" stroke="#7aa2c4" stroke-width="1.4" fill="none"/><path d="M6 11 H17 M11.5 5.5 V16.5" stroke="#d8a0a8" stroke-width="1.5" fill="none"/><circle cx="11.5" cy="11" r="2" fill="#c8a0a8"/></svg>
<div class="abs" style="left:365.5px;top:491px;width:22.5px;height:23px;border:1px solid #b8b8b8;background:#fdfdfd;box-sizing:border-box;"></div>
<svg class="abs" style="left:369px;top:495px" width="16" height="15" viewBox="0 0 16 15"><path d="M2 1.5 L14 13.5 M14 1.5 L2 13.5" stroke="#1c1c1c" stroke-width="2.3" fill="none"/></svg>
<div class="abs" style="left:259px;top:582px;width:62px;height:40px;background:#8dc2cf;"></div>
<div class="abs" style="left:273px;top:591px;font-size:17px;line-height:24px;color:#e6f4f8;white-space:nowrap;">确定</div>
<div class="abs" style="left:326px;top:582px;width:61px;height:40px;background:#dfdfdf;border:1px solid #b4b4b4;box-sizing:border-box;"></div>
</div>

<!-- ============ RIGHT PANEL ============ -->
<div id="rp" class="abs" style="left:978.5px;top:106px;width:22px;height:620px;background:#fff;overflow:hidden;">
 <div class="abs" style="left:0;top:0;width:1px;height:620px;background:#e4e4e4;"></div>
<div class="abs" style="left:1px;top:34.5px;width:22px;height:1.3px;background:#9c9c9c;"></div>
<div class="abs" style="left:11.3px;top:45.8px;width:20px;height:13px;border:1.6px solid #111;border-top-width:3px;box-sizing:border-box;background:#fff;"></div>
<div class="abs" style="left:8px;top:67px;width:20px;height:305px;border-left:1px solid #dcdcdc;border-top:1px solid #dcdcdc;box-sizing:border-box;"></div>
<div class="abs" style="left:9px;top:68px;width:20px;height:27.5px;background:#efefef;border-bottom:1px solid #dcdcdc;box-sizing:border-box;"></div>
<div class="t17" style="left:13.5px;top:70px;color:#222;">名称</div>
<div class="abs" style="left:18.5px;top:109px;width:0;height:75px;border-left:1px dotted #aaa;"></div>
<div class="abs" style="left:13.8px;top:104px;width:10px;height:10px;border:1px solid #c4c4c4;box-sizing:border-box;background:#fff;"></div>
<div class="abs" style="left:15.5px;top:108.4px;width:7px;height:1px;background:#444;"></div>
<div class="abs" style="left:18.2px;top:105.5px;width:1px;height:7px;background:#444;"></div>
<div class="abs" style="left:13.8px;top:128.5px;width:10px;height:10px;border:1px solid #c4c4c4;box-sizing:border-box;background:#fff;"></div>
<div class="abs" style="left:15.5px;top:132.9px;width:7px;height:1px;background:#444;"></div>
<div class="abs" style="left:18.2px;top:130.0px;width:1px;height:7px;background:#444;"></div>
<div class="abs" style="left:13.8px;top:154px;width:10px;height:10px;border:1px solid #c4c4c4;box-sizing:border-box;background:#fff;"></div>
<div class="abs" style="left:15.5px;top:158.4px;width:7px;height:1px;background:#444;"></div>
<div class="abs" style="left:18.2px;top:155.5px;width:1px;height:7px;background:#444;"></div>
<div class="abs" style="left:13.8px;top:179px;width:10px;height:10px;border:1px solid #c4c4c4;box-sizing:border-box;background:#fff;"></div>
<div class="abs" style="left:15.5px;top:183.4px;width:7px;height:1px;background:#444;"></div>
<div class="abs" style="left:9px;top:195.5px;width:20px;height:1px;background:#ededed;"></div>
<div class="abs" style="left:9px;top:220.5px;width:20px;height:1px;background:#ededed;"></div>
<div class="abs" style="left:9px;top:245.5px;width:20px;height:1px;background:#ededed;"></div>
<div class="abs" style="left:9px;top:270.5px;width:20px;height:1px;background:#ededed;"></div>
<div class="abs" style="left:9px;top:295.5px;width:20px;height:1px;background:#ededed;"></div>
<div class="abs" style="left:9px;top:320.5px;width:20px;height:1px;background:#ededed;"></div>
<div class="abs" style="left:9px;top:345.5px;width:20px;height:1px;background:#ededed;"></div>
<div class="abs" style="left:7.5px;top:371px;width:20px;height:4px;background:#c6c6c6;"></div>
<div class="abs" style="left:13.5px;top:381.0px;font-size:20.4px;line-height:24px;color:#26708c;white-space:nowrap;">相依性</div>
<div class="abs" style="left:7.5px;top:404.5px;width:20px;height:230px;border-left:1px solid #dcdcdc;border-top:1px solid #dcdcdc;box-sizing:border-box;"></div>
<div class="abs" style="left:13.5px;top:406.5px;font-size:20.4px;line-height:24px;color:#26708c;white-space:nowrap;">细节</div>
<div class="abs" style="left:14px;top:432px;width:20px;height:190px;border-left:1px solid #dcdcdc;border-top:1px solid #dcdcdc;box-sizing:border-box;background:#fff;"></div>
<div class="abs" style="left:15px;top:433px;width:20px;height:28px;background:#eeeeee;border-bottom:1px solid #dcdcdc;box-sizing:border-box;"></div>
<div class="abs" style="left:15px;top:486px;width:20px;height:1px;background:#ececec;"></div>
<div class="abs" style="left:15px;top:511px;width:20px;height:1px;background:#ececec;"></div>
<div class="abs" style="left:15px;top:536px;width:20px;height:1px;background:#ececec;"></div>
<div class="abs" style="left:15px;top:561px;width:20px;height:1px;background:#ececec;"></div>
</div>

<!-- ============ WATERMARK ============ -->
<svg class="abs" style="left:800px;top:676px" width="110" height="50" viewBox="800 676 110 50">
 <g fill="#ffffff" opacity=".42">
  <ellipse cx="846" cy="696" rx="5.2" ry="7.5"/><ellipse cx="860" cy="692" rx="5.4" ry="7.8"/><ellipse cx="834" cy="708" rx="5" ry="7"/><ellipse cx="871" cy="703" rx="4.6" ry="6.6"/>
  <path d="M838 726 Q836 712 852 708 Q868 712 866 726 Z"/>
 </g>
 <g fill="#ffffff" opacity=".55" font-family="Liberation Sans, sans-serif" font-weight="bold" font-size="30"><text x="818" y="735">jing</text></g>
</svg>
<div class="abs" style="left:897px;top:693px;width:103px;height:33px;background:#fbfcfd;"></div>
<div class="abs" style="left:866px;top:694px;width:31.5px;height:32px;background:#1059a8;"></div>
<svg class="abs" style="left:866px;top:694px" width="32" height="32" viewBox="0 0 32 32">
 <g transform="translate(0.4,-2.5)"><circle cx="16" cy="17" r="10.2" fill="#fff"/>
 <path d="M16 9.6 A7.4 7.4 0 1 0 22.6 20.4 H18.4 A3.8 3.8 0 0 1 12.6 18.4 H23.4 A7.4 7.4 0 0 0 16 9.6 Z M12.6 15.4 A3.8 3.8 0 0 1 19.4 15.4 Z" fill="#1059a8"/>
 <rect x="14.8" y="5.6" width="2.4" height="6.6" fill="#fff"/><rect x="14.8" y="22" width="2.4" height="6.4" fill="#fff"/></g>
</svg>
<div class="abs" style="left:900px;top:693.5px;font-size:18.6px;line-height:25px;font-weight:500;color:#1c5ca8;white-space:nowrap;letter-spacing:1.2px;-webkit-text-stroke:.35px #1c5ca8;">易采站长站</div>
<div class="abs" style="left:900px;top:720.5px;width:18px;height:1px;background:#5a7ab0;"></div>
<div class="abs" style="left:920px;top:715.4px;font-size:6.1px;line-height:9px;font-style:italic;color:#555;white-space:nowrap;">Www.Easck.Com Webmaster</div>

</body>
</html>
